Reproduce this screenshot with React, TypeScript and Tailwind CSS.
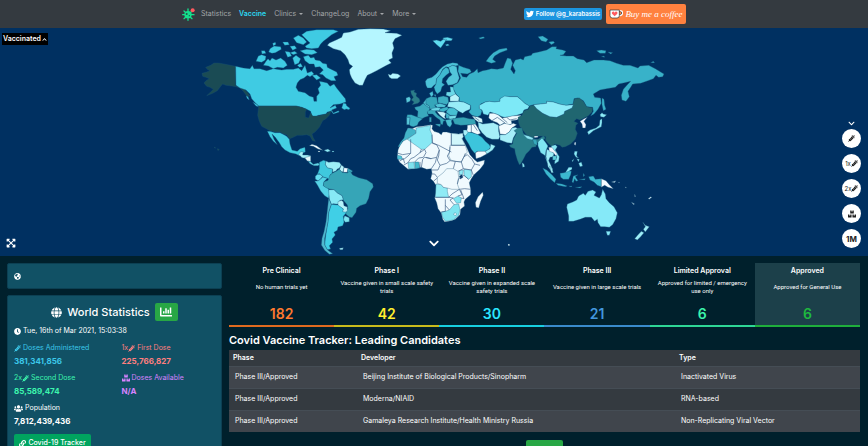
import { useState } from 'react';
import {
  FaBoxes,
  FaChartBar,
  FaChevronDown,
  FaChevronUp,
  FaClock,
  FaExpandArrowsAlt,
  FaGlobe,
  FaGlobeAmericas,
  FaLink,
  FaSyringe,
  FaTwitter,
  FaUsers,
} from 'react-icons/fa';

type Shape = [fill: string, d: string];

// Each region has its own grid, three units to one map unit
const regions: { name: string; transform: string; shapes: Shape[] }[] = [
  {
    name: 'north-america',
    transform: 'translate(190 0) scale(0.33333)',
    shapes: [
      ['#1a4b54', 'M137 115L102 108L85 105L72 105L62 112L47 118L52 124L60 128L50 132L36 136L38 145L48 148L58 152L48 158L42 165L50 175L60 178L70 184L62 192L50 203L68 196L82 188L92 175L98 168L108 172L125 174L138 176L150 180L160 190L172 206L180 204L168 188L155 178L137 174Z'],
      ['#3fcbe3', 'M137 115L160 120L180 122L187 112L192 122L210 122L230 128L250 122L275 126L290 124L310 124L325 120L335 128L345 112L352 135L365 130L372 138L360 146L352 142L342 150L330 155L322 165L318 178L325 190L345 194L358 204L370 208L372 220L380 220L380 205L388 195L384 182L392 172L388 160L400 162L412 165L420 175L432 168L440 180L452 195L466 212L468 222L450 228L430 230L420 240L436 232L440 240L425 246L430 255L445 248L448 252L430 258L424 250L412 252L408 258L385 262L372 268L365 262L362 250L350 244L335 238L318 234L206 234L196 225L185 212L180 198L168 186L150 180L138 172Z'],
      ['#3fcbe3', 'M455 240L460 225L468 227L470 233L480 241L477 245L469 243L463 245ZM188 222L202 230L206 236L198 234ZM168 203L174 206L178 216L172 212Z'],
      ['#3fcbe3', 'M228 100L234 92L240 98L246 90L258 96L272 90L285 100L292 112L280 120L262 118L250 122L235 114L220 112ZM205 84L215 80L228 85L226 96L215 103L198 100Z'],
      ['#3fcbe3', 'M340 86L355 82L362 90L372 88L376 96L390 98L398 106L410 108L412 118L420 122L440 132L444 142L432 146L438 158L424 158L408 150L398 140L388 138L400 126L390 116L375 118L372 108L358 108L345 98Z'],
      ['#3fcbe3', 'M335 20L350 10L380 5L430 5L445 10L425 20L410 32L400 40L392 48L385 60L365 62L350 60L345 55L360 45L350 35ZM310 30L325 22L340 30L350 42L340 50L320 44Z'],
      ['#3fcbe3', 'M330 68L350 64L372 66L382 74L365 80L345 78ZM300 55L314 53L320 61L308 67ZM240 62L252 54L272 56L274 64L256 74L246 76L236 72ZM248 46L256 43L258 49L250 54ZM278 42L294 42L298 50L284 52ZM214 68L224 68L228 76L216 78ZM308 90L318 82L332 92L326 106L314 110ZM285 70L299 72L305 84L293 88ZM366 142L380 140L392 150L380 156ZM322 112L332 106L338 116L328 118ZM300 74L314 70L322 76L310 80Z'],
      ['#b5f6ff', 'M418 45L440 35L455 28L460 15L480 12L505 4L540 2L580 3L602 8L585 14L620 16L636 22L615 32L608 45L612 60L606 75L608 90L596 96L604 105L590 112L575 120L560 128L545 136L532 142L525 155L518 172L508 172L495 165L485 150L480 138L478 125L488 115L478 108L474 95L465 80L452 68L430 62L412 52Z'],
      ['#b5f6ff', 'M594 138L602 141L608 136L624 138L632 144L622 152L605 152L598 148Z'],
      ['#1a4b54', 'M206 234L318 234L335 238L350 244L346 252L346 268L356 270L362 254L368 264L384 264L408 258L424 248L418 262L408 272L398 278L392 290L388 298L375 312L366 318L370 330L376 340L368 338L360 324L350 320L336 322L322 322L305 330L298 332L290 320L280 318L270 312L255 312L240 308L225 300L215 295L208 280L203 262Z'],
      ['#43cfe2', 'M232 310L240 310L255 314L270 314L282 320L290 325L298 334L300 348L306 366L322 370L330 362L345 358L346 372L336 376L330 384L318 378L300 374L285 366L275 356L268 344L256 328L246 318L252 334L262 350L250 340L240 326Z'],
      ['#1a4b54', 'M82 362L88 364L84 368ZM72 358L76 358L76 361Z'],
    ],
  },
  {
    name: 'south-america',
    transform: 'translate(290 97) scale(0.33333)',
    shapes: [
      ['#f2fbff', 'M58 62L66 58L80 62L90 70L98 76L84 72L70 64ZM84 78L90 78L90 81L84 81Z'],
      ['#8feaf5', 'M102 76L114 72L122 78L112 81ZM126 78L132 78L132 81L126 81Z'],
      ['#a8f0f8', 'M26 88L32 80L40 80L38 90L52 90L62 92L60 98L46 100L36 98Z'],
      ['#e8fbff', 'M44 98L62 93L62 110L52 108Z'],
      ['#62d8e8', 'M54 108L62 110L70 118L84 114L90 118L84 122L72 122L60 116Z'],
      ['#3fc9de', 'M88 112L100 106L108 108L106 118L112 128L128 132L126 146L120 150L122 166L112 160L100 156L88 146L82 148L88 132Z'],
      ['#9defF7', 'M108 108L116 112L130 110L148 112L154 120L148 130L142 132L138 138L128 142L128 132L112 128L106 118Z'],
      ['#baf4fa', 'M154 120L162 126L160 138L156 142L148 134Z'],
      ['#f2f9ff', 'M162 128L174 130L172 142L160 142Z'],
      ['#3aa9bd', 'M174 130L188 138L180 146L172 142Z'],
      ['#66def0', 'M82 148L90 148L98 154L92 162L84 168L76 162L76 154Z'],
      ['#55d3e6', 'M98 156L112 160L102 170L100 182L112 188L116 192L118 206L116 220L104 212L92 198L82 180L74 168L84 168L92 162Z'],
      ['#36a5b7', 'M128 144L140 138L148 132L156 142L172 144L180 138L188 150L206 158L230 164L248 176L250 186L240 200L236 220L228 236L210 242L200 250L198 262L186 278L178 276L168 268L166 258L174 252L172 240L160 226L156 212L142 204L132 194L118 192L108 188L100 182L102 170L114 166L120 150Z'],
      ['#86e9f5', 'M116 194L132 194L142 204L156 212L160 224L150 226L144 238L130 236L124 238L118 222Z'],
      ['#b4f3fa', 'M144 230L154 226L160 230L162 242L172 246L172 258L164 264L156 260L160 252L144 242Z'],
      ['#7ce4f0', 'M164 272L178 278L178 290L166 292L160 284Z'],
      ['#40cfe6', 'M124 238L144 240L160 252L158 260L170 262L160 274L162 292L158 302L144 306L142 316L132 322L136 330L126 342L128 352L118 362L122 372L112 374L104 360L106 340L110 312L114 290L116 262Z'],
      ['#4fb9cf', 'M116 220L124 238L116 262L114 290L110 312L104 340L104 360L112 374L128 386L118 388L104 376L94 360L96 340L102 320L108 290L112 256Z'],
      ['#a8eef8', 'M148 370L160 368L158 374L150 374Z'],
    ],
  },
  {
    name: 'eurasia',
    transform: 'translate(390 0) scale(0.33333)',
    shapes: [
      ['#5fdcf0', 'M128 38L140 36L152 40L160 34L170 34L162 46L152 60L140 50ZM158 30L172 28L188 32L184 38L166 38ZM166 50L174 48L178 52L170 54Z'],
      ['#3ab4cb', 'M266 30L280 26L284 30L272 33ZM288 100L298 86L310 74L328 64L350 60L352 66L330 74L314 84L308 94L318 102L304 106ZM444 26L458 24L474 34L468 42L454 38ZM476 42L490 40L494 44L484 50ZM620 68L634 66L648 68L646 76L630 76ZM654 72L668 74L662 78ZM634 86L642 84L644 88ZM782 104L790 100L794 104ZM636 210L642 214L644 232L648 244L640 248L636 230Z'],
      ['#4cc3d9', 'M108 172L106 160L112 152L126 148L138 138L148 126L158 116L172 108L188 104L202 106L206 112L196 114L188 112L176 118L168 116L158 124L150 140L140 152L138 168L132 172L124 180L112 180Z'],
      ['#3fb9d0', 'M168 118L176 122L178 134L168 142L158 152L156 164L164 170L156 176L152 190L142 198L136 190L132 178L138 168L140 152L150 140L158 126Z'],
      ['#52c6da', 'M176 118L188 112L200 116L202 130L208 150L202 164L188 170L174 172L168 160L176 148L186 140L180 132Z'],
      ['#4cc3d9', 'M118 196L128 190L130 200L124 208ZM132 200L138 200L136 206Z'],
      ['#2b7e88', 'M62 188L74 186L72 192L80 196L78 204L88 212L90 220L84 226L66 230L72 222L64 216L70 208L64 198Z'],
      ['#5acbdc', 'M48 210L58 206L62 212L60 220L50 224Z'],
      ['#39a9bd', 'M74 238L90 234L100 226L106 230L120 240L118 248L112 254L116 264L104 268L96 272L82 268L84 250L76 244Z'],
      ['#4cbccf', 'M100 224L108 214L112 216L108 228L120 234L118 240L106 232Z'],
      ['#3bb0c4', 'M52 260L64 260L84 268L98 272L86 282L82 292L70 296L62 294L58 290L60 268L50 268Z'],
      ['#58c8da', 'M50 268L60 268L58 290L50 290Z'],
      ['#35a6ba', 'M108 212L122 206L140 208L144 228L134 232L140 242L120 244L118 234L108 228Z'],
      ['#3dafc3', 'M144 208L160 204L174 208L176 222L170 230L152 226L144 224Z'],
      ['#39a9bd', 'M112 250L126 244L138 246L136 252L144 262L156 270L166 278L160 280L158 290L152 288L150 276L138 268L128 258L114 258ZM136 288L152 288L150 296L140 292ZM118 268L124 268L124 282L118 282Z'],
      ['#50c4d6', 'M134 230L150 226L168 232L164 238L142 238Z'],
      ['#66d4e3', 'M122 242L142 238L152 240L148 248L126 248Z'],
      ['#3db4c8', 'M150 242L172 236L176 244L160 252L148 248Z'],
      ['#46bfd3', 'M176 240L192 240L204 250L200 262L180 262L168 252Z'],
      ['#c9f5fb', 'M140 250L160 252L168 256L164 266L168 274L160 270L150 262Z'],
      ['#42b6ca', 'M168 254L180 262L176 272L168 270Z'],
      ['#74dbe8', 'M176 264L200 262L196 272L178 274Z'],
      ['#4cc0d2', 'M166 276L192 272L184 278L186 288L180 298L172 292Z'],
      ['#6bd9e8', 'M180 176L194 178L192 186L198 200L180 206L168 202L170 192L182 192Z'],
      ['#b7f3fa', 'M180 206L196 198L208 208L206 220L180 220Z'],
      ['#98ecf7', 'M176 222L206 220L222 222L242 232L240 244L226 250L218 256L206 250L192 240L172 236Z'],
      ['#35a5b6', 'M188 274L200 270L220 268L238 272L254 274L258 288L238 290L212 292L194 288Z'],
      ['#d8f8fc', 'M246 264L262 266L276 272L278 284L264 282L254 274Z'],
      ['#38b2c9', 'M206 112L220 118L240 124L244 132L232 138L212 136L218 146L230 148L238 138L252 132L262 122L264 134L278 128L290 126L304 122L322 124L340 120L346 104L352 90L362 92L368 106L362 124L372 138L376 128L368 112L376 96L392 92L400 96L404 86L424 82L428 76L446 72L470 66L486 56L500 56L498 62L518 66L528 70L520 80L510 82L530 84L550 84L562 92L582 96L590 104L612 96L640 96L660 98L680 106L700 112L720 112L744 120L750 114L776 112L796 122L812 132L822 138L818 146L806 148L798 142L790 152L774 158L752 166L728 168L722 178L714 190L718 206L708 220L696 216L694 202L700 184L712 170L722 160L704 164L686 168L676 178L650 182L630 186L610 198L614 208L632 210L634 226L624 244L612 258L602 264L610 250L608 238L590 236L580 218L564 210L552 212L550 228L528 232L508 228L490 222L470 220L470 226L452 228L430 230L418 234L404 226L394 216L382 206L360 206L344 206L330 212L330 220L314 222L298 220L286 222L272 228L268 240L276 248L272 262L262 266L246 262L236 252L242 244L242 232L222 222L208 220L208 208L198 198L190 182L190 172L204 164L212 150L204 130Z'],
      ['#7de9f7', 'M268 232L286 222L298 220L314 222L330 220L330 212L344 204L360 206L382 206L394 216L404 226L418 234L414 242L402 246L398 256L380 262L360 266L344 268L336 266L324 260L312 256L300 252L294 262L280 258L276 246L268 242Z'],
      ['#eefbff', 'M298 256L312 256L324 260L336 270L350 268L366 264L392 262L396 268L380 276L364 278L366 288L352 292L344 284L330 292L322 284L306 278L296 270Z'],
      ['#a5eef8', 'M264 282L278 288L296 286L310 284L326 292L326 310L330 326L326 334L306 334L290 328L276 314L266 300Z'],
      ['#f4fcff', 'M326 294L344 286L360 290L370 286L380 290L366 300L358 312L346 320L330 318Z'],
      ['#a5eef8', 'M330 320L346 320L358 312L366 300L376 298L388 304L378 316L370 330L366 346L352 344L330 336Z'],
      ['#f0fbff', 'M232 292L256 288L264 300L272 316L262 320L244 312L228 318L232 300Z'],
      ['#206670', 'M384 268L396 262L402 248L416 244L420 234L430 232L440 242L458 256L480 266L500 268L522 258L524 250L546 240L548 230L554 212L568 210L580 220L590 236L608 240L606 252L594 264L582 270L570 276L560 272L552 280L564 286L558 292L556 304L562 316L556 334L542 348L526 356L516 358L510 352L494 348L486 356L474 346L466 336L468 326L450 324L432 330L410 322L400 308L390 296L386 284Z'],
      ['#8cebf8', 'M430 230L452 228L470 226L470 220L490 222L508 228L528 232L550 230L546 240L524 250L522 258L500 268L480 266L458 256L440 242Z'],
    ],
  },
  {
    name: 'africa',
    transform: 'translate(390 72) scale(0.33333)',
    shapes: [
      ['#3cc5dc', 'M222 104L232 96L246 98L264 104L276 112L286 124L298 134L302 142L296 150L280 156L262 154L254 160L244 148L236 132L226 116Z'],
      ['#9cecf6', 'M302 132L316 138L308 150L294 160L288 162L286 154L300 146Z'],
      ['#f2fbff', 'M256 158L264 154L286 154L290 162L272 172L258 176Z'],
      ['#a5eef8', 'M220 90L230 90L234 98L226 108L220 102Z'],
      ['#29808c', 'M370 118L380 100L372 92L384 84L396 84L400 100L412 108L430 116L444 118L460 108L466 114L458 122L454 138L446 128L440 130L438 140L426 142L418 152L408 162L402 174L392 192L388 194L382 180L376 160L374 146L362 142L358 136L368 132Z'],
      ['#8feaf5', 'M400 104L416 108L430 114L428 120L412 116ZM396 188L402 192L404 200L398 202Z'],
      ['#f0fafe', 'M54 84L66 86L80 80L100 78L122 74L128 76L126 86L132 94L146 98L154 104L158 96L170 96L184 100L206 102L218 100L220 110L216 116L224 130L232 146L240 164L252 178L262 186L284 180L282 192L270 208L252 224L244 236L238 248L242 268L242 284L226 298L222 306L224 318L212 328L210 344L196 358L184 362L164 366L158 358L154 340L144 326L140 308L134 294L140 272L138 256L130 244L122 236L126 220L124 206L110 208L94 202L74 206L54 208L40 196L28 186L22 172L24 150L30 134L40 122L48 104Z'],
      ['#43b4c8', 'M54 84L66 86L76 90L78 100L66 108L50 118L38 124L28 140L24 140L32 126L42 114L46 98Z'],
      ['#88e8f4', 'M78 84L100 80L122 76L120 90L126 104L126 128L104 148L94 148L52 118L66 108L78 100Z'],
      ['#cff6fb', 'M184 100L206 102L218 100L220 110L216 116L226 136L184 136Z'],
      ['#4fc4d8', 'M22 166L34 168L38 178L22 178Z'],
      ['#7fe2ee', 'M54 188L72 186L74 206L56 206Z'],
      ['#41b7cb', 'M74 186L86 186L90 204L76 206Z'],
      ['#90ebf5', 'M138 252L154 254L160 262L172 264L172 274L176 292L136 292Z'],
      ['#90ebf5', 'M222 208L244 210L244 230L236 238L222 226ZM208 212L220 210L218 224L208 224Z'],
      ['#7ee5f1', 'M154 336L166 334L178 330L192 314L206 312L210 330L206 346L190 360L166 364L158 352Z'],
      ['#7ee5f1', 'M190 296L204 288L214 294L212 308L200 310Z'],
      ['#e8f9fd', 'M190 342L196 338L200 342L196 348Z'],
      ['#f0fafe', 'M278 276L280 286L272 304L266 324L258 322L256 308L264 290Z'],
      ['#f0fafe', 'M354 432L359 432L359 437L354 437Z'],
      ['#f0fafe', 'M142 232L160 218L170 206L190 206L204 214L206 232L202 252L208 268L186 268L172 264L160 262L154 254L142 250Z'],
      ['#f0fafe', 'M176 166L180 150L180 136L226 136L232 156L222 170L214 186L196 184L182 180Z'],
      ['#003061', 'M208 228L216 224L219 232L211 237Z'],
    ],
  },
  {
    name: 'oceania',
    transform: 'translate(520 82) scale(0.33333)',
    shapes: [
      ['#37aabb', 'M38 88L50 90L52 106L42 102Z'],
      ['#f3f6ff', 'M180 34L192 26L202 22L192 34L198 44L196 54L188 54L186 42Z'],
      ['#8cebf7', 'M202 66L210 60L228 54L238 46L240 30L246 26L246 38L244 50L232 56L220 62L206 74ZM240 14L246 8L250 12L260 14L252 22L242 20Z'],
      ['#f3f6ff', 'M163 98L168 96L167 106L163 104ZM42 78L54 78L54 82L44 83Z'],
      ['#7fe5f2', 'M54 96L66 84L76 96L84 108L78 122L76 140L86 156L82 160L74 136L62 128L54 108Z'],
      ['#9cedf7', 'M80 118L92 122L102 130L100 140L90 142L86 152L92 164L98 178L94 184L84 170L82 158L78 140Z'],
      ['#88e8f4', 'M94 108L106 104L112 110L106 120L118 140L116 154L104 162L104 154L110 142L104 130L94 120Z'],
      ['#f0f6ff', 'M86 112L96 112L102 120L112 132L108 138L100 128L88 124Z'],
      ['#5fcede', 'M98 138L110 138L108 150L98 150Z'],
      ['#9cedf7', 'M88 168L96 174L100 188L94 188Z'],
      ['#3bb8cf', 'M68 174L80 180L96 194L108 208L104 218L92 208L78 192ZM108 220L126 222L142 228L136 230L114 226ZM120 190L132 188L146 182L154 184L152 194L146 208L130 208L122 202ZM160 198L174 194L166 200L174 212L168 214L164 206L160 218L156 216ZM146 228L156 228L154 231ZM166 232L186 230L180 234ZM190 190L194 196L190 200ZM178 208L196 206L194 210ZM206 200L220 198L226 208L244 206L244 230L232 226L222 216L210 210Z'],
      ['#8cebf7', 'M136 188L146 172L156 172L156 178L146 184ZM164 124L172 124L170 138L176 144L168 142L162 132ZM176 160L184 156L188 168L180 170ZM170 146L178 148L176 156ZM156 152L162 146L158 156Z'],
      ['#f6faff', 'M244 206L258 212L268 224L280 236L264 232L254 226L244 232Z'],
      ['#c5dcea', 'M274 216L288 212L284 218ZM296 216L300 218L296 219ZM334 276L344 282L340 284ZM384 266L392 260L396 262L388 268ZM316 230L320 234L316 234ZM344 252L347 260L344 260Z'],
      ['#85e9f8', 'M140 292L142 282L158 276L170 270L176 258L190 250L196 256L204 244L218 240L228 246L222 256L238 264L244 254L248 238L256 252L258 266L268 278L282 290L292 308L288 326L278 344L268 352L254 350L242 350L234 338L232 328L224 334L214 322L196 322L180 328L160 334L146 334L146 318ZM258 364L272 364L268 376L262 376Z'],
      ['#9cedf7', 'M368 336L376 346L388 350L382 358L376 366L370 358L376 350ZM364 364L372 368L362 380L352 390L344 386L354 374Z'],
    ],
  },
];

const africaBorders =
  'M62 118V160L38 164L24 160M62 160L54 168L44 176L38 178M94 148L90 158L72 172L62 176L54 188M104 148L108 158L100 172L86 174L74 186M90 158L104 148M126 128L140 134L148 150L140 172L122 176L104 172L98 178L94 202M140 172L136 188L124 206M126 104L128 130L146 136L184 156M184 100V136H226M148 150L146 168L142 180L150 196L144 210L126 210M180 140L178 158L172 168L180 182L170 190L150 196M180 182L196 184L214 186L222 170L226 160M196 184L190 206M222 170L232 164L246 178L254 192L270 196M214 186L220 206L244 210L254 192M244 210L250 226M204 214L220 206M202 252L206 236L222 226L236 238M208 268L224 266L242 268M176 292L186 282L208 268L216 284L204 288M136 292L176 292L190 294M166 298V334L154 336M166 316L178 330M190 294L180 300L192 314M214 294L222 296L212 270M122 222L134 222L142 232M130 244L142 234M28 184L40 176L44 190M54 188L40 196M124 176L108 172M90 186V204';

function WorldMap() {
  return (
    <svg viewBox="0 0 868 228" className="block w-full" role="img" aria-label="World map">
      {regions.map((region) => (
        <g key={region.name} transform={region.transform} stroke="#17547a" strokeWidth={1} strokeLinejoin="round">
          {region.shapes.map(([fill, d], i) => (
            <path key={i} fill={fill} d={d} />
          ))}
          {region.name === 'africa' && <path fill="none" stroke="#3d5f86" strokeWidth={2} d={africaBorders} />}
          {region.name === 'eurasia' && (
            <path
              fill="none"
              stroke="#3d5f86"
              strokeWidth={2}
              d="M306 278L322 268L344 284M244 290L244 312M250 290L262 308M336 270L352 284M350 268L360 276L380 272M254 268L268 278"
            />
          )}
        </g>
      ))}
    </svg>
  );
}

function Logo() {
  return (
    <svg viewBox="0 0 39 39" className="size-[13px]" aria-hidden="true">
      <g stroke="#14e08c" strokeWidth={4} strokeLinecap="round">
        <path d="M18 3V37M2 20H36M6 9L30 32M6 32L28 11" />
      </g>
      <circle cx="18" cy="20" r="11" fill="#14e08c" />
      <circle cx="14" cy="18" r="3" fill="#1d5c4d" />
      <circle cx="22" cy="23" r="2" fill="#1d5c4d" />
      <circle cx="32" cy="7" r="6" fill="#ff5a5f" />
    </svg>
  );
}

function Cup() {
  return (
    <svg viewBox="0 0 42 30" className="h-[10px] w-[14px]" aria-hidden="true">
      <path d="M30 6H36Q40 6 40 12Q40 18 34 19H29" fill="none" stroke="#fff" strokeWidth={5} />
      <path d="M3 3H31V20Q31 27 24 27H10Q3 27 3 20Z" fill="#fff" stroke="#2b2b2b" strokeWidth={2} />
      <path d="M30 8H35Q38 8 38 12Q38 16 34 17H31" fill="none" stroke="#2b2b2b" strokeWidth={2} />
      <path d="M17 22L9 14Q7 9 11 8Q15 7 17 11Q19 7 23 8Q27 9 25 14Z" fill="#ff5a5f" />
    </svg>
  );
}

const navLinks = [
  { label: 'Statistics' },
  { label: 'Vaccine', active: true },
  { label: 'Clinics', menu: true },
  { label: 'ChangeLog' },
  { label: 'About', menu: true },
  { label: 'More', menu: true },
];

function Navbar() {
  return (
    <header className="bg-[#343a40]">
      <div className="mx-auto flex h-7 w-full max-w-[504px] items-center">
        <a href="#home" aria-label="Home" className="mr-[6px]">
          <Logo />
        </a>
        <nav className="flex items-center gap-2">
          {navLinks.map((link) => (
            <a
              key={link.label}
              href={`#${link.label.toLowerCase()}`}
              className={link.active ? 'font-semibold text-[#2bd9f2]' : 'text-[#a3a6a9]'}
            >
              {link.label}
              {link.menu && (
                <span className="ml-[3px] inline-block border-x-2 border-t-2 border-x-transparent border-t-current align-middle" />
              )}
            </a>
          ))}
        </nav>
        <div className="ml-auto flex items-center gap-1">
          <a
            href="#follow"
            className="flex h-3 w-[78px] items-center justify-center gap-[2px] rounded-[2px] bg-[#1b95e0] text-[6px] font-semibold whitespace-nowrap text-white"
          >
            <FaTwitter className="size-2" />
            Follow @g_karabassis
          </a>
          <a
            href="#coffee"
            className="flex h-5 w-20 items-center justify-center gap-[2px] rounded-[2px] bg-[#ff813f] font-['Liberation_Serif',serif] text-[9px] whitespace-nowrap text-white italic"
          >
            <Cup />
            Buy me a coffee
          </a>
        </div>
      </div>
    </header>
  );
}

const layers = [
  { id: 'doses', label: 'Doses', content: <FaSyringe className="size-[7px]" /> },
  { id: 'first', label: 'First dose', content: <>1x<FaSyringe className="size-[7px]" /></> },
  { id: 'second', label: 'Second dose', content: <>2x<FaSyringe className="size-[7px]" /></> },
  { id: 'available', label: 'Available', content: <FaBoxes className="size-2" /> },
  { id: 'million', label: 'Per million', content: <span className="text-[8px] font-bold">1M</span> },
];

function MapPanel({ onLayer }: { onLayer: (id: string) => void }) {
  return (
    <section className="relative bg-[#003061] text-white">
      <WorldMap />
      <button className="absolute top-[5px] left-[2px] flex h-3 items-center gap-px bg-black px-px text-[7px] font-semibold">
        Vaccinated
        <FaChevronUp className="size-[5px]" />
      </button>
      <button aria-label="Fullscreen" className="absolute bottom-2 left-[6px]">
        <FaExpandArrowsAlt className="size-[10px]" />
      </button>
      <button aria-label="Scroll down" className="absolute bottom-[7px] left-1/2 -translate-x-1/2">
        <FaChevronDown className="size-[11px]" />
      </button>
      <div className="absolute right-[7px] bottom-2 flex flex-col items-center gap-[6px]">
        <FaChevronDown className="-mb-1 size-[7px]" />
        {layers.map((layer) => (
          <button
            key={layer.id}
            aria-label={layer.label}
            onClick={() => onLayer(layer.id)}
            className="flex size-[19px] items-center justify-center rounded-full bg-white text-[6px] text-[#222]"
          >
            {layer.content}
          </button>
        ))}
      </div>
    </section>
  );
}

const stats = [
  { label: 'Doses Administered', value: '381,341,856', color: 'text-[#3cc8ea]', icon: <FaSyringe className="size-[7px]" /> },
  { label: 'First Dose', value: '225,766,827', color: 'text-[#ff7f7f]', icon: <>1x<FaSyringe className="size-[7px]" /></> },
  { label: 'Second Dose', value: '85,589,474', color: 'text-[#3df5ae]', icon: <>2x<FaSyringe className="size-[7px]" /></> },
  { label: 'Doses Available', value: 'N/A', color: 'text-[#d783ff]', icon: <FaBoxes className="size-2" /> },
  { label: 'Population', value: '7,812,439,436', color: 'text-white', icon: <FaUsers className="size-[9px]" /> },
];

function WorldStatistics() {
  return (
    <aside className="flex w-[215px] shrink-0 flex-col gap-[6px]">
      <div className="flex h-[26px] items-center rounded-[2px] border border-[#0c4053] bg-[#115165] px-[6px]">
        <FaGlobeAmericas className="size-[7px]" />
      </div>
      <div className="rounded-[2px] border border-[#0c4053] bg-[#115165] px-[6px] pt-[7px] pb-4">
        <div className="flex items-center justify-center gap-[5px]">
          <FaGlobe className="size-[11px]" />
          <h2 className="text-[11px] font-medium">World Statistics</h2>
          <button aria-label="Charts" className="flex h-[18px] w-[23px] items-center justify-center rounded-[2px] bg-[#28a745]">
            <FaChartBar className="size-3" />
          </button>
        </div>
        <p className="mt-1 flex h-3 items-center gap-[2px]">
          <FaClock className="size-[7px]" />
          Tue, 16th of Mar 2021, 15:03:38
        </p>
        <dl className="mt-[5px] grid grid-cols-2 gap-x-[14px] gap-y-1">
          {stats.map((stat) => (
            <div key={stat.label} className={stat.color}>
              <dt className="flex h-3 items-center gap-[2px] whitespace-nowrap">
                <span className="flex items-center">{stat.icon}</span>
                {stat.label}
              </dt>
              <dd className="text-[8px] leading-[14px] font-bold">{stat.value}</dd>
            </div>
          ))}
        </dl>
        <a
          href="#tracker"
          className="mt-[6px] inline-flex h-[18px] w-[77px] items-center justify-center gap-[2px] rounded-[2px] bg-[#00a45f] font-medium"
        >
          <FaLink className="size-[7px]" />
          Covid-19 Tracker
        </a>
      </div>
    </aside>
  );
}

const phases = [
  { title: 'Pre Clinical', note: 'No human trials yet', count: 182, color: 'text-[#ff7a2f] border-[#e06a1f]' },
  { title: 'Phase I', note: 'Vaccine given in small scale safety trials', count: 42, color: 'text-[#fff02e] border-[#c9bb1c]' },
  { title: 'Phase II', note: 'Vaccine given in expanded scale safety trials', count: 30, color: 'text-[#2be6ff] border-[#17cfe0]' },
  { title: 'Phase III', note: 'Vaccine given in large scale trials', count: 21, color: 'text-[#4397dd] border-[#3a8bcb]' },
  { title: 'Limited Approval', note: 'Approved for limited / emergency use only', count: 6, color: 'text-[#3cf5ab] border-[#2ed696]' },
  { title: 'Approved', note: 'Approved for General Use', count: 6, color: 'text-[#1fb93f] border-[#1fae3c]', selected: true },
];

const candidates = [
  { phase: 'Phase III/Approved', developer: 'Beijing Institute of Biological Products/Sinopharm', type: 'Inactivated Virus' },
  { phase: 'Phase III/Approved', developer: 'Moderna/NIAID', type: 'RNA-based' },
  { phase: 'Phase III/Approved', developer: 'Gamaleya Research Institute/Health Ministry Russia', type: 'Non-Replicating Viral Vector' },
];

function Tracker() {
  return (
    <main className="min-w-0 flex-1">
      <div className="grid grid-cols-6">
        {phases.map((phase) => (
          <button
            key={phase.title}
            className={`flex h-16 flex-col items-center border-b-2 pt-[2px] ${phase.color} ${phase.selected ? 'bg-[#1c404a]' : ''}`}
          >
            <span className="text-[7px] leading-3 font-semibold text-white">{phase.title}</span>
            <span className="flex h-5 items-center px-1 font-['Roboto',sans-serif] text-[6px] leading-2 text-white">{phase.note}</span>
            <span className="mt-[7px] text-[14px] leading-5 font-semibold">{phase.count}</span>
          </button>
        ))}
      </div>
      <h1 className="mt-[5px] mb-[2px] text-[11px] leading-4 font-semibold">Covid Vaccine Tracker: Leading Candidates</h1>
      <table className="w-full table-fixed text-left">
        <thead className="bg-[#343a40]">
          <tr className="h-4">
            <th className="w-32 pl-1 font-semibold">Phase</th>
            <th className="pl-1 font-semibold">Developer</th>
            <th className="w-[185px] pl-1 font-semibold">Type</th>
          </tr>
        </thead>
        <tbody>
          {candidates.map((row) => (
            <tr key={row.developer} className="h-[22px] border-t border-[#454d55] bg-[#343a40] odd:bg-[#40454c]">
              <td className="pl-[6px]">{row.phase}</td>
              <td className="pl-[6px]">{row.developer}</td>
              <td className="pl-[6px]">{row.type}</td>
            </tr>
          ))}
        </tbody>
      </table>
      <div className="mt-2 flex justify-center">
        <button aria-label="Show all candidates" className="h-[18px] w-[37px] rounded-[2px] bg-[#28a745]" />
      </div>
    </main>
  );
}

export default function App() {
  const [layer, setLayer] = useState('doses');

  return (
    <div
      data-layer={layer}
      className="h-screen overflow-hidden bg-[#00202c] font-['Inter',sans-serif] text-[7px] leading-[10px] text-white"
    >
      <Navbar />
      <MapPanel onLayer={setLayer} />
      <div className="flex gap-[7px] pt-[7px] pr-2 pl-[7px]">
        <WorldStatistics />
        <Tracker />
      </div>
    </div>
  );
}
